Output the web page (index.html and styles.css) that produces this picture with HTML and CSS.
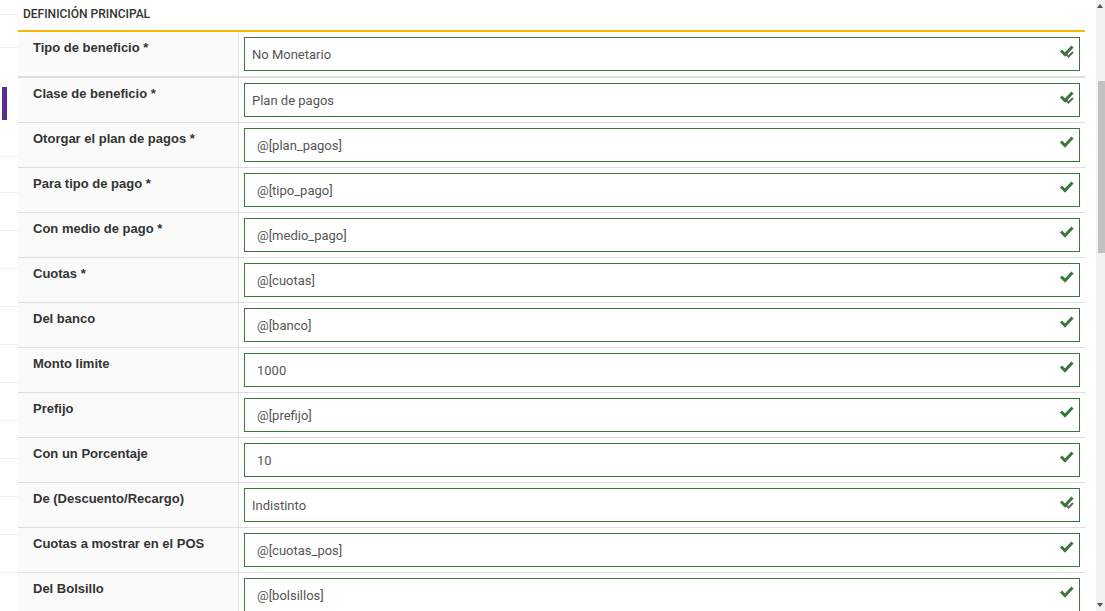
FILE: index.html
```html
<!DOCTYPE html>
<html lang="es">
<head>
<meta charset="utf-8">
<title>Definición principal</title>
<link rel="stylesheet" href="styles.css">
</head>
<body>
<div class="page">
  <aside class="side">
    <div class="side-line l1"></div>
    <div class="side-line l2"></div>
    <div class="side-active"></div>
    <div class="side-line l3"></div>
    <div class="side-line"></div>
    <div class="side-line"></div>
    <div class="side-line"></div>
    <div class="side-line"></div>
    <div class="side-line"></div>
    <div class="side-line"></div>
    <div class="side-line"></div>
    <div class="side-line"></div>
    <div class="side-line"></div>
    <div class="side-line"></div>
    <div class="side-line"></div>
  </aside>
  <main class="main">
    <div class="section-title">DEFINICIÓN PRINCIPAL</div>
    <div class="form">
      <div class="row first">
        <div class="label">Tipo de beneficio *</div>
        <div class="cell"><div class="field select"><span>No Monetario</span><svg class="ok" viewBox="0 0 16 14"><path class="arrow" d="M6 9 L9.5 12.5 L14 8"/><path class="chk" d="M2 6.5 L6 10.5 L13.5 2.5"/></svg></div></div>
      </div>
      <div class="row">
        <div class="label">Clase de beneficio *</div>
        <div class="cell"><div class="field select"><span>Plan de pagos</span><svg class="ok" viewBox="0 0 16 14"><path class="arrow" d="M6 9 L9.5 12.5 L14 8"/><path class="chk" d="M2 6.5 L6 10.5 L13.5 2.5"/></svg></div></div>
      </div>
      <div class="row">
        <div class="label">Otorgar el plan de pagos *</div>
        <div class="cell"><div class="field"><span>@[plan_pagos]</span><svg class="ok" viewBox="0 0 16 14"><path class="chk" d="M2 6.5 L6 10.5 L13.5 2.5"/></svg></div></div>
      </div>
      <div class="row">
        <div class="label">Para tipo de pago *</div>
        <div class="cell"><div class="field"><span>@[tipo_pago]</span><svg class="ok" viewBox="0 0 16 14"><path class="chk" d="M2 6.5 L6 10.5 L13.5 2.5"/></svg></div></div>
      </div>
      <div class="row">
        <div class="label">Con medio de pago *</div>
        <div class="cell"><div class="field"><span>@[medio_pago]</span><svg class="ok" viewBox="0 0 16 14"><path class="chk" d="M2 6.5 L6 10.5 L13.5 2.5"/></svg></div></div>
      </div>
      <div class="row">
        <div class="label">Cuotas *</div>
        <div class="cell"><div class="field"><span>@[cuotas]</span><svg class="ok" viewBox="0 0 16 14"><path class="chk" d="M2 6.5 L6 10.5 L13.5 2.5"/></svg></div></div>
      </div>
      <div class="row">
        <div class="label">Del banco</div>
        <div class="cell"><div class="field"><span>@[banco]</span><svg class="ok" viewBox="0 0 16 14"><path class="chk" d="M2 6.5 L6 10.5 L13.5 2.5"/></svg></div></div>
      </div>
      <div class="row">
        <div class="label">Monto limite</div>
        <div class="cell"><div class="field"><span>1000</span><svg class="ok" viewBox="0 0 16 14"><path class="chk" d="M2 6.5 L6 10.5 L13.5 2.5"/></svg></div></div>
      </div>
      <div class="row">
        <div class="label">Prefijo</div>
        <div class="cell"><div class="field"><span>@[prefijo]</span><svg class="ok" viewBox="0 0 16 14"><path class="chk" d="M2 6.5 L6 10.5 L13.5 2.5"/></svg></div></div>
      </div>
      <div class="row">
        <div class="label">Con un Porcentaje</div>
        <div class="cell"><div class="field"><span>10</span><svg class="ok" viewBox="0 0 16 14"><path class="chk" d="M2 6.5 L6 10.5 L13.5 2.5"/></svg></div></div>
      </div>
      <div class="row">
        <div class="label">De (Descuento/Recargo)</div>
        <div class="cell"><div class="field select"><span>Indistinto</span><svg class="ok" viewBox="0 0 16 14"><path class="arrow" d="M6 9 L9.5 12.5 L14 8"/><path class="chk" d="M2 6.5 L6 10.5 L13.5 2.5"/></svg></div></div>
      </div>
      <div class="row">
        <div class="label">Cuotas a mostrar en el POS</div>
        <div class="cell"><div class="field"><span>@[cuotas_pos]</span><svg class="ok" viewBox="0 0 16 14"><path class="chk" d="M2 6.5 L6 10.5 L13.5 2.5"/></svg></div></div>
      </div>
      <div class="row">
        <div class="label">Del Bolsillo</div>
        <div class="cell"><div class="field"><span>@[bolsillos]</span><svg class="ok" viewBox="0 0 16 14"><path class="chk" d="M2 6.5 L6 10.5 L13.5 2.5"/></svg></div></div>
      </div>
    </div>
  </main>
  <div class="scrollbar">
    <div class="sb-up"></div>
    <div class="sb-gap"></div>
    <div class="sb-thumb"></div>
    <div class="sb-rest"></div>
    <div class="sb-down"></div>
  </div>
</div>
</body>
</html>
```

FILE: styles.css
```css
html, body {
  margin: 0;
  padding: 0;
  height: 611px;
  overflow: hidden;
  background: #fff;
}

.page {
  display: flex;
  height: 611px;
  width: 1105px;
}

/* left sidebar fragment */
.side {
  width: 18px;
  flex: none;
  display: flex;
  flex-direction: column;
  padding-top: 14px;
  box-sizing: border-box;
}
.side-line {
  height: 38px;
  border-top: 1px solid #f0f0f0;
  box-sizing: border-box;
  flex: none;
}
.side-line.l1 { height: 33px; }
.side-line.l2 { height: 40px; }
.side-active {
  width: 5px;
  height: 33px;
  margin-left: 2px;
  background: #5b2d90;
  flex: none;
}
.side-line.l3 { height: 36px; margin-top: 36px; }

/* main form */
.main {
  width: 1067px;
  flex: none;
}

.section-title {
  height: 30px;
  padding-left: 5px;
  font-family: Roboto, "Liberation Sans", sans-serif;
  font-weight: 500;
  font-size: 12px;
  line-height: 28px;
  color: #333;
  border-bottom: 2px solid #f6b800;
  box-sizing: content-box;
}

.row {
  display: flex;
  height: 45px;
  border-bottom: 1px solid #dedede;
  box-sizing: border-box;
}
.row.first {
  height: 46px;
  border-bottom-width: 2px;
}

.label {
  width: 221px;
  flex: none;
  box-sizing: border-box;
  padding: 8px 0 0 15px;
  background: #fafafa;
  border-right: 1px solid #e2e2e2;
  font-family: "Liberation Sans", Arial, sans-serif;
  font-weight: bold;
  font-size: 13px;
  line-height: 16px;
  color: #333;
}

.cell {
  flex: 1;
  padding: 5px 5px 0 5px;
  background: #fff;
}

.field {
  position: relative;
  height: 34px;
  box-sizing: border-box;
  border: 1px solid #3c763d;
  padding-left: 12px;
  display: flex;
  align-items: center;
  font-family: Roboto, "Liberation Sans", sans-serif;
  font-size: 13px;
  color: #555;
}
.field.select {
  padding-left: 7px;
}

.ok {
  position: absolute;
  right: 4px;
  top: 6px;
  width: 16px;
  height: 14px;
}
.ok .chk {
  fill: none;
  stroke: #3c763d;
  stroke-width: 3;
  stroke-linejoin: miter;
}
.ok .arrow {
  fill: none;
  stroke: #666;
  stroke-width: 2;
}

/* scrollbar */
.scrollbar {
  margin-left: 11px;
  width: 9px;
  flex: none;
  background: #f1f1f1;
  display: flex;
  flex-direction: column;
}
.sb-up {
  height: 10px;
  flex: none;
  position: relative;
}
.sb-up::after {
  content: "";
  position: absolute;
  left: 1px;
  top: 4px;
  border-left: 3px solid transparent;
  border-right: 3px solid transparent;
  border-bottom: 4px solid #505050;
}
.sb-gap { height: 71px; flex: none; }
.sb-thumb {
  height: 172px;
  flex: none;
  margin-left: 2px;
  background: #c1c1c1;
}
.sb-rest { flex: 1; }
.sb-down {
  height: 10px;
  flex: none;
  position: relative;
}
.sb-down::after {
  content: "";
  position: absolute;
  left: 1px;
  top: 2px;
  border-left: 3px solid transparent;
  border-right: 3px solid transparent;
  border-top: 4px solid #505050;
}
```
